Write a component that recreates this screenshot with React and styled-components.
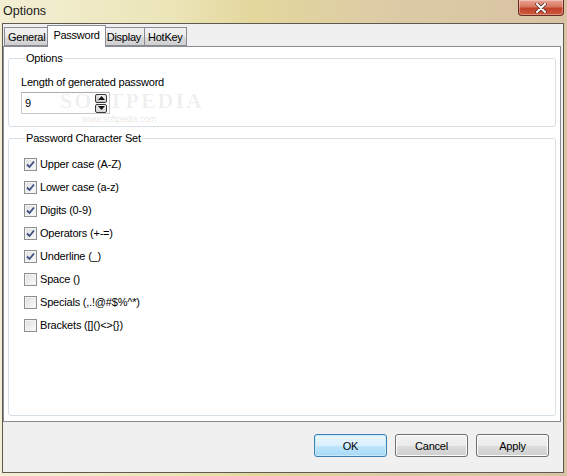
import React from 'react'
import styled, { createGlobalStyle } from 'styled-components'

const GlobalStyle = createGlobalStyle`
  html, body {
    margin: 0;
    padding: 0;
    background: #d9c9a8;
  }
  * {
    box-sizing: border-box;
  }
`

const Window = styled.div`
  width: 567px;
  height: 476px;
  display: flex;
  flex-direction: column;
  font-family: "Liberation Sans", Arial, sans-serif;
  font-size: 11px;
  letter-spacing: -0.2px;
  color: #000;
  background: linear-gradient(90deg, #f3efd4 0%, #ece5b8 30%, #e3d79d 45%, #dccaa6 70%, #d8c3a2 100%);
  position: relative;
  overflow: hidden;
`

const TitleBar = styled.div`
  height: 23px;
  display: flex;
  justify-content: space-between;
  align-items: flex-start;
  padding-left: 3px;
  padding-right: 3px;
`

const Title = styled.span`
  font-size: 12.5px;
  letter-spacing: 0;
  line-height: 14px;
  margin-top: 4px;
  color: #1a1a1a;
`

const CloseButton = styled.div`
  width: 46px;
  height: 16px;
  border: 1px solid #6b2b22;
  border-top: none;
  border-radius: 0 0 4px 4px;
  background: linear-gradient(180deg, #e8a392 0%, #d9775f 45%, #c2432a 55%, #cc5a3d 100%);
  display: flex;
  align-items: center;
  justify-content: center;
  box-shadow: inset 0 0 0 1px rgba(255, 255, 255, 0.35);
`

const Client = styled.div`
  flex: 1;
  margin: 0 3px 3px 2px;
  border: 1px solid #5e5a4f;
  background: #f0f0f0;
  display: flex;
  flex-direction: column;
`

const TabStrip = styled.div`
  height: 22px;
  display: flex;
  align-items: flex-end;
  padding-left: 1px;
  letter-spacing: -0.25px;
`

const Tab = styled.div`
  height: ${p => (p.active ? '22px' : '19px')};
  padding: ${p => (p.active ? '2px 5px 0' : '2px 3px 0')};
  margin: ${p => (p.active ? '0 -2px -1px' : '0')};
  border: 1px solid #898c95;
  border-bottom: ${p => (p.active ? 'none' : '1px solid #898c95')};
  margin-left: ${p => (p.active ? '-2px' : '-1px')};
  background: ${p => (p.active ? '#fff' : 'linear-gradient(180deg, #f2f2f2 0%, #ebebeb 50%, #dddddd 51%, #cfcfcf 100%)')};
  position: relative;
  z-index: ${p => (p.active ? 2 : 1)};
  line-height: 15px;
  &:first-child {
    margin-left: 0;
  }
`

const Panel = styled.div`
  height: 376px;
  margin-right: 2px;
  background: #fff;
  border: 1px solid #898c95;
  padding: 4px 4px 5px 4px;
  display: flex;
  flex-direction: column;
  gap: 4px;
`

const Group = styled.fieldset`
  margin: 0;
  border: 1px solid #d5dfe5;
  border-radius: 3px;
  padding: 0 12px;
  height: ${p => p.h || 'auto'};
  flex: ${p => (p.grow ? 1 : 'none')};
  display: flex;
  flex-direction: column;
  min-width: 0;
`

const Legend = styled.legend`
  padding: 0 1px;
  margin-left: 4px;
  line-height: 14px;
`

const FieldLabel = styled.div`
  margin-top: 10px;
  line-height: 14px;
`

const SpinEdit = styled.div`
  margin-top: 3px;
  width: 89px;
  height: 22px;
  border: 1px solid #c5c9ce;
  border-top-color: #abadb3;
  display: flex;
  align-items: center;
  justify-content: space-between;
  padding: 1px 2px 1px 3px;
`

const SpinValue = styled.span`
  line-height: 14px;
`

const SpinButtons = styled.div`
  display: flex;
  flex-direction: column;
  gap: 1px;
`

const SpinButton = styled.div`
  width: 12px;
  height: 9px;
  border: 1px solid #3a3a3a;
  border-radius: 2px;
  background: linear-gradient(180deg, #f4f4f4, #d4d4d4);
  display: flex;
  align-items: center;
  justify-content: center;
`

const CheckList = styled.div`
  display: flex;
  flex-direction: column;
  gap: 10px;
  margin-top: 13px;
  padding-left: 3px;
`

const CheckRow = styled.label`
  display: flex;
  align-items: center;
  gap: 3px;
  height: 13px;
  line-height: 13px;
`

const Box = styled.span`
  width: 13px;
  height: 13px;
  border: 1px solid #8e8f8f;
  background: linear-gradient(135deg, #dcdcdc 0%, #f0f0f0 60%, #fbfbfb 100%);
  box-shadow: inset 0 0 0 1px #f4f4f4;
  display: flex;
  align-items: center;
  justify-content: center;
`

const ButtonRow = styled.div`
  flex: 1;
  display: flex;
  justify-content: flex-end;
  align-items: flex-start;
  gap: 8px;
  padding: 12px 14px 0 0;
`

const Button = styled.div`
  width: 73px;
  height: 23px;
  border: 1px solid ${p => (p.primary ? '#3c7fb1' : '#707070')};
  border-radius: 3px;
  background: ${p => (p.primary
    ? 'linear-gradient(180deg, #eaf6fd 0%, #d9f0fc 50%, #bee6fd 51%, #a7d9f5 100%)'
    : 'linear-gradient(180deg, #f2f2f2 0%, #ebebeb 50%, #dddddd 51%, #cfcfcf 100%)')};
  box-shadow: inset 0 0 0 1px ${p => (p.primary ? '#c8e9fb' : '#fcfcfc')};
  display: flex;
  align-items: center;
  justify-content: center;
  line-height: 14px;
`

const Watermark = styled.div`
  position: absolute;
  left: 60px;
  top: 88px;
  font-family: "Liberation Serif", serif;
  font-size: 22px;
  letter-spacing: 2px;
  color: rgba(0, 0, 0, 0.07);
  font-weight: bold;
  pointer-events: none;
`

const WatermarkUrl = styled.div`
  position: absolute;
  left: 82px;
  top: 114px;
  font-size: 9px;
  color: rgba(0, 0, 0, 0.12);
  pointer-events: none;
`

const options = [
  { label: 'Upper case (A-Z)', checked: true },
  { label: 'Lower case (a-z)', checked: true },
  { label: 'Digits (0-9)', checked: true },
  { label: 'Operators (+-=)', checked: true },
  { label: 'Underline (_)', checked: true },
  { label: 'Space ()', checked: false },
  { label: 'Specials (,.!@#$%^*)', checked: false },
  { label: 'Brackets ([]()<>{})', checked: false },
]

const Check = () => (
  <svg width="9" height="9" viewBox="0 0 9 9">
    <path d="M1 4.5 L3.5 7 L8 1.5" fill="none" stroke="#3c4f80" strokeWidth="1.8" />
  </svg>
)

const Arrow = ({ up }) => (
  <svg width="7" height="4" viewBox="0 0 7 4">
    <path d={up ? 'M0 4 L3.5 0 L7 4 Z' : 'M0 0 L3.5 4 L7 0 Z'} fill="#111" />
  </svg>
)

const App = () => {
  return (
    <Window>
      <GlobalStyle />
      <TitleBar>
        <Title>Options</Title>
        <CloseButton>
          <svg width="12" height="10" viewBox="0 0 12 10">
            <path d="M2 1 L10 9 M10 1 L2 9" stroke="#4a2a25" strokeWidth="3.4" strokeLinecap="round" />
            <path d="M2 1 L10 9 M10 1 L2 9" stroke="#fff" strokeWidth="2" strokeLinecap="round" />
          </svg>
        </CloseButton>
      </TitleBar>
      <Client>
        <TabStrip>
          <Tab>General</Tab>
          <Tab active>Password</Tab>
          <Tab>Display</Tab>
          <Tab>HotKey</Tab>
        </TabStrip>
        <Panel>
          <Group h="76px">
            <Legend>Options</Legend>
            <FieldLabel>Length of generated password</FieldLabel>
            <SpinEdit>
              <SpinValue>9</SpinValue>
              <SpinButtons>
                <SpinButton><Arrow up /></SpinButton>
                <SpinButton><Arrow /></SpinButton>
              </SpinButtons>
            </SpinEdit>
          </Group>
          <Group grow>
            <Legend>Password Character Set</Legend>
            <CheckList>
              {options.map((item, index) => (
                <CheckRow key={index}>
                  <Box>{item.checked && <Check />}</Box>
                  <span>{item.label}</span>
                </CheckRow>
              ))}
            </CheckList>
          </Group>
        </Panel>
        <ButtonRow>
          <Button primary>OK</Button>
          <Button>Cancel</Button>
          <Button>Apply</Button>
        </ButtonRow>
      </Client>
      <Watermark>SOFTPEDIA</Watermark>
      <WatermarkUrl>www.softpedia.com</WatermarkUrl>
    </Window>
  )
}

export default App
